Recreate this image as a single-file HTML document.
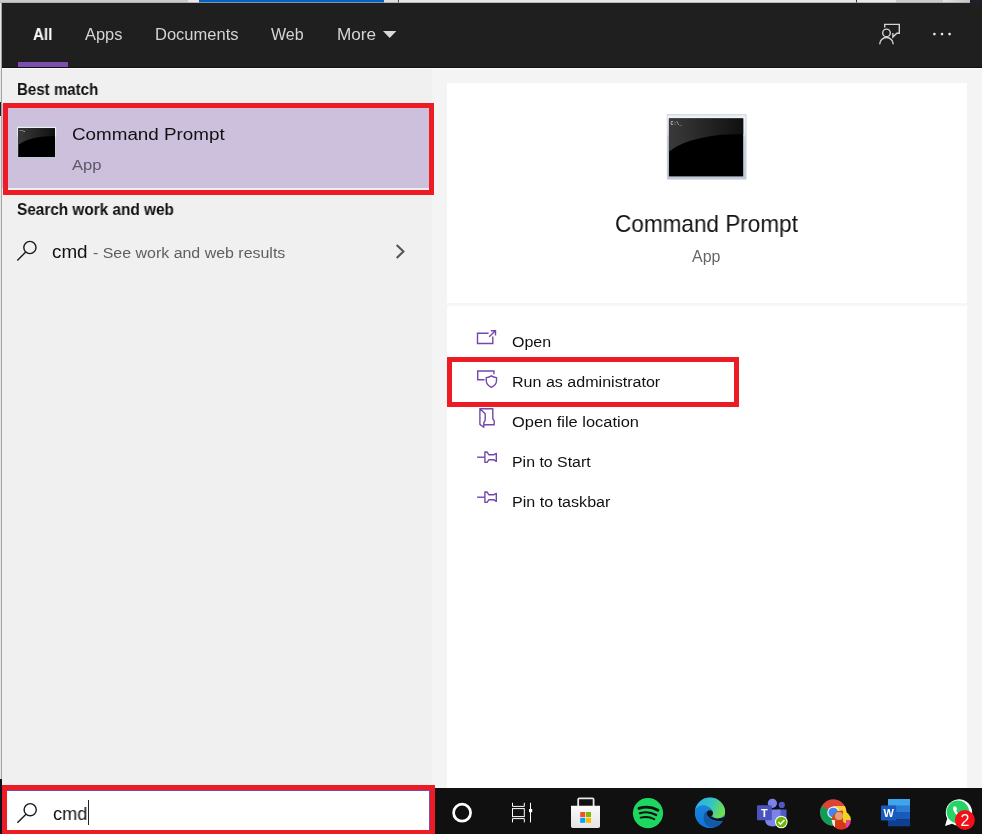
<!DOCTYPE html>
<html><head><meta charset="utf-8">
<style>
*{margin:0;padding:0;box-sizing:border-box}
html,body{width:982px;height:834px;overflow:hidden;background:#f4f4f4;font-family:"Liberation Sans",sans-serif;}
.a{position:absolute}
.t{position:absolute;white-space:nowrap;line-height:1;transform-origin:0 0;will-change:transform}
#hdr{left:2px;top:3px;width:980px;height:65px;background:#1f1f1f}
#left{left:2px;top:68px;width:430px;height:720px;background:#f0f0f0}
#right{left:432px;top:68px;width:550px;height:720px;background:#f4f4f4}
#card{left:447px;top:83px;width:520px;height:705px;background:#fff}
#task{left:0;top:788px;width:982px;height:46px;background:#101010}
.red{position:absolute;border:5px solid #ed1c24}
</style></head><body>
<!-- top strip -->
<div class="a" style="left:0;top:0;width:982px;height:3px;background:#cacaca"></div>
<div class="a" style="left:188px;top:0;width:11px;height:3px;background:#e9e9e9"></div>
<div class="a" style="left:199px;top:0;width:185px;height:3px;background:#0560c2"></div>
<div class="a" style="left:384px;top:0;width:14px;height:3px;background:#dedede"></div>
<div class="a" style="left:398px;top:0;width:1px;height:3px;background:#4a4a4a"></div>
<div class="a" style="left:399px;top:0;width:457px;height:3px;background:#e7e7e7"></div>
<div class="a" style="left:856px;top:0;width:1px;height:3px;background:#333"></div>
<div class="a" style="left:857px;top:0;width:39px;height:3px;background:#e9e9e9"></div>
<div class="a" style="left:896px;top:0;width:47px;height:3px;background:#cbcbcb"></div>
<div class="a" style="left:943px;top:0;width:27px;height:3px;background:linear-gradient(90deg,#e4e4e4,#c4c4c4)"></div>
<div class="a" style="left:970px;top:0;width:12px;height:3px;background:#1c212b"></div>
<div class="a" style="left:0;top:2px;width:970px;height:1px;background:#a8a8a8;opacity:.75"></div>
<!-- left strip -->
<div class="a" style="left:0;top:3px;width:2px;height:776px;background:#e6e6e6"></div>
<div class="a" style="left:1px;top:3px;width:1px;height:776px;background:#a4a4a4"></div>
<div class="a" style="left:0;top:102px;width:1px;height:14px;background:#222"></div>
<div id="hdr" class="a"></div>
<div id="left" class="a"></div>
<div id="right" class="a"></div>
<div id="card" class="a"></div>
<div id="task" class="a"></div>
<div class="a" style="left:2px;top:67px;width:980px;height:1px;background:#111"></div>
<div class="a" style="left:2px;top:68px;width:980px;height:1px;background:#fbfbfb"></div>

<!-- selected item -->
<div class="a" style="left:2px;top:104px;width:430px;height:84px;background:#cdc0dc"></div>
<div class="red" style="left:3px;top:103px;width:431px;height:92px"></div>
<!-- card divider -->
<div class="a" style="left:447px;top:303px;width:520px;height:3px;background:#f6f6f6"></div>
<div class="red" style="left:447px;top:357px;width:292px;height:50px"></div>
<!-- search box -->
<div class="a" style="left:2px;top:785px;width:433px;height:49px;background:#fff"></div>
<div class="a" style="left:7px;top:790px;width:423px;height:40px;border:1px solid #6b4fbb;border-bottom:none;border-left:none"></div>
<div class="red" style="left:2px;top:785px;width:433px;height:50px"></div>
<div class="a" style="left:0;top:779px;width:2px;height:55px;background:#0c1220"></div>
<div class="a" style="left:88px;top:800px;width:1px;height:25px;background:#222"></div>

<div class="t" style="left:33.20px;top:27px;font-size:16px;font-weight:bold;color:#ffffff;transform:scaleX(0.9500)">All</div>
<div class="t" style="left:85.20px;top:27px;font-size:16px;font-weight:normal;color:#d4d4d4;transform:scaleX(1.0255)">Apps</div>
<div class="t" style="left:155.17px;top:27px;font-size:16px;font-weight:normal;color:#d4d4d4;transform:scaleX(1.0323)">Documents</div>
<div class="t" style="left:270.90px;top:27px;font-size:16px;font-weight:normal;color:#d4d4d4;transform:scaleX(0.9966)">Web</div>
<div class="t" style="left:336.83px;top:27px;font-size:16px;font-weight:normal;color:#d4d4d4;transform:scaleX(1.0716)">More</div>
<div class="t" style="left:16.66px;top:82px;font-size:16px;font-weight:bold;color:#111111;transform:scaleX(0.9423)">Best match</div>
<div class="t" style="left:71.90px;top:126px;font-size:17.3px;font-weight:normal;color:#111111;transform:scaleX(1.0889)">Command Prompt</div>
<div class="t" style="left:71.90px;top:158px;font-size:14.7px;font-weight:normal;color:#5d5866;transform:scaleX(1.1284)">App</div>
<div class="t" style="left:17.40px;top:202px;font-size:16px;font-weight:bold;color:#111111;transform:scaleX(0.9589)">Search work and web</div>
<div class="t" style="left:51.70px;top:243px;font-size:18.5px;font-weight:normal;color:#111111;transform:scaleX(1.0184)">cmd</div>
<div class="t" style="left:93.30px;top:245px;font-size:15.4px;font-weight:normal;color:#5f5f5f;transform:scaleX(1.0359)">- See work and web results</div>
<div class="t" style="left:614.93px;top:213px;font-size:23.2px;font-weight:normal;color:#111111;transform:scaleX(0.9723)">Command Prompt</div>
<div class="t" style="left:692.30px;top:249px;font-size:15.7px;font-weight:normal;color:#666666;transform:scaleX(1.0182)">App</div>
<div class="t" style="left:512.10px;top:334px;font-size:15.5px;font-weight:normal;color:#111111;transform:scaleX(1.0323)">Open</div>
<div class="t" style="left:511.76px;top:374px;font-size:15.5px;font-weight:normal;color:#111111;transform:scaleX(1.0364)">Run as administrator</div>
<div class="t" style="left:512.10px;top:414px;font-size:15.5px;font-weight:normal;color:#111111;transform:scaleX(1.0600)">Open file location</div>
<div class="t" style="left:511.77px;top:454px;font-size:15.5px;font-weight:normal;color:#111111;transform:scaleX(1.0253)">Pin to Start</div>
<div class="t" style="left:511.76px;top:494px;font-size:15.5px;font-weight:normal;color:#111111;transform:scaleX(1.0384)">Pin to taskbar</div>
<div class="t" style="left:52.70px;top:805px;font-size:18.5px;font-weight:normal;color:#111111;transform:scaleX(0.9809)">cmd</div>
<svg class="a" style="left:383px;top:31px" width="14" height="7"><path d="M0 0H13.4L6.7 7Z" fill="#d8d8d8"/></svg>
<div class="a" style="left:18px;top:62px;width:50px;height:5px;background:#7b4fb0"></div>
<!-- header right icons -->
<svg class="a" style="left:870px;top:15px" width="100" height="40" viewBox="870 15 100 40" fill="none" stroke="#d4d4d4" stroke-width="1.4">
<path d="M884.7 27.6V24.4H899.3V33.3H896.8L892.9 37V33"/>
<circle cx="886.5" cy="32.9" r="3.8"/>
<path d="M879.7 44.2A6.75 6.75 0 0 1 893.2 44.2"/>
<g fill="#e6e6e6" stroke="none"><circle cx="934.4" cy="34.1" r="1.35"/><circle cx="942" cy="34.1" r="1.35"/><circle cx="949.6" cy="34.1" r="1.35"/></g>
</svg>
<!-- cmd icon defs -->
<svg width="0" height="0" style="position:absolute">
<defs>
<linearGradient id="gl" x1="0" y1="0" x2="1" y2="0"><stop offset="0" stop-color="#3a3a3a"/><stop offset="1" stop-color="#101010"/></linearGradient>
<linearGradient id="fr" x1="0" y1="0" x2="0" y2="1"><stop offset="0" stop-color="#dfe5ee"/><stop offset="0.05" stop-color="#f2f4f8"/><stop offset="0.3" stop-color="#e9edf3"/><stop offset="0.36" stop-color="#ced6e3"/><stop offset="1" stop-color="#c1c9d8"/></linearGradient>
</defs></svg>
<!-- small cmd icon -->
<svg class="a" style="left:16px;top:125px" width="42" height="36" viewBox="16 125 42 36">
<rect x="17" y="126.5" width="39.3" height="32" fill="url(#fr)" stroke="#bcc4d2" stroke-width="0.4"/>
<rect x="18.2" y="128.2" width="36.8" height="28.8" fill="#000"/>
<path d="M18.2 128.2H55V136Q30 136 18.2 145Z" fill="url(#gl)"/>
<path d="M19.5 130.5h1M21.5 130.5h1.2l1 1h1.2" stroke="#bbb" stroke-width="0.8" fill="none"/>
</svg>
<!-- big cmd icon -->
<svg class="a" style="left:664px;top:112px;will-change:transform" width="86" height="72" viewBox="664 112 86 72">
<rect x="667.6" y="115.2" width="79" height="64.6" fill="#000" opacity="0.12"/>
<rect x="667.1" y="114.5" width="78.8" height="64.4" fill="url(#fr)" stroke="#bcc4d2" stroke-width="0.5"/>
<rect x="668.9" y="118.4" width="74.3" height="58" fill="#000"/>
<path d="M668.9 118.4H743.2V134Q692 134 668.9 151.5Z" fill="url(#gl)"/>
<text x="670.6" y="125.3" font-family="Liberation Mono,monospace" font-size="4.8" font-weight="bold" fill="#c8c8c8">C:\_</text>
</svg>
<!-- search icon 1 -->
<svg class="a" style="left:14px;top:238px" width="28" height="26" viewBox="14 238 28 26" fill="none" stroke="#1a1a1a" stroke-width="1.4">
<circle cx="29.9" cy="247.5" r="6.1"/><path d="M25.7 252L17.3 260.6"/></svg>
<!-- chevron -->
<svg class="a" style="left:390px;top:240px" width="20" height="24" viewBox="390 240 20 24" fill="none" stroke="#555" stroke-width="2.1">
<path d="M396.7 245L403.4 251.5L396.7 258"/></svg>
<!-- action icons -->
<svg class="a" style="left:470px;top:325px" width="36" height="190" viewBox="470 325 36 190" fill="none" stroke="#7447ab" stroke-width="1.4">
<!-- open -->
<path d="M488.6 333.3H477.5V343.5H492.8V336.4"/><path d="M489.2 336.7L495.4 330.8M490.8 330.7H495.5V335.4"/>
<!-- run as admin -->
<path d="M484.6 379.8H477.7V371H493.9V374.2"/>
<path d="M486.3 377.6Q489.3 377.4 491.4 375.9Q493.5 377.4 496.5 377.6V381Q496.3 385 491.4 387.3Q486.5 385 486.3 381Z"/>
<!-- folder -->
<g stroke-linejoin="round"><path d="M479.9 408.7H492.8V419L494.2 420.6V424.8H484"/>
<path d="M479.9 408.7L485.2 413.7V420.4L483.8 422.6V427.2L479.9 424.4Z"/></g>
<!-- pins -->
<g id="pin" stroke-linejoin="round"><path d="M477.1 457.2H484.9"/><path d="M484.9 452H487L488.8 454.7H493.9L496.3 453.4V461.4L493.9 459.8H488.8L487 462.4H484.9Z"/></g>
<use href="#pin" y="40"/>
</svg>
<!-- search icon 2 -->
<svg class="a" style="left:14px;top:800px" width="28" height="26" viewBox="14 800 28 26" fill="none" stroke="#1a1a1a" stroke-width="1.4">
<circle cx="30.2" cy="809.7" r="6.1"/><path d="M26 814.2L17.4 822.8"/></svg>
<!-- taskbar icons -->
<svg class="a" style="left:440px;top:788px;will-change:transform" width="542" height="46" viewBox="440 788 542 46">
<defs>
<linearGradient id="eg1" x1="0" y1="0.2" x2="1" y2="0.6"><stop offset="0" stop-color="#2fa8ee"/><stop offset="0.5" stop-color="#33c3c4"/><stop offset="1" stop-color="#72e048"/></linearGradient>
<linearGradient id="eg2" x1="0" y1="0" x2="0" y2="1"><stop offset="0" stop-color="#1f8ade"/><stop offset="1" stop-color="#0d74d6"/></linearGradient>
<linearGradient id="bag" x1="0" y1="0" x2="0" y2="1"><stop offset="0" stop-color="#fafafa"/><stop offset="1" stop-color="#e4e4e4"/></linearGradient>
<filter id="bl" x="-20%" y="-20%" width="140%" height="140%"><feGaussianBlur stdDeviation="0.7"/></filter>
<clipPath id="av"><circle cx="841.3" cy="820.2" r="9.6"/></clipPath>
<clipPath id="ec"><circle cx="710" cy="812.9" r="15.3"/></clipPath>
</defs>
<!-- cortana -->
<circle cx="462.1" cy="812.7" r="8.5" fill="none" stroke="#fff" stroke-width="2.7"/>
<!-- task view -->
<g fill="none" stroke="#fff" stroke-width="1">
<path d="M512.5 802.8V806.4H524.3V802.8"/><rect x="512.5" y="808.6" width="11.8" height="8"/><path d="M512.5 822.4V818.6H524.3V822.4"/>
<path d="M530.5 802.8V822.4"/></g>
<rect x="529" y="809" width="3.2" height="3.2" fill="#fff"/>
<!-- store -->
<path d="M578.2 806V799.4Q578.2 798.4 579.2 798.4H592.6Q593.6 798.4 593.6 799.4V806" fill="none" stroke="#e8e8e8" stroke-width="1.8"/>
<path d="M571 805.8H600V826.2Q600 828 598.2 828H572.8Q571 828 571 826.2Z" fill="url(#bag)"/>
<rect x="580.2" y="812" width="5" height="5" fill="#f25022"/><rect x="586" y="812" width="5" height="5" fill="#7fba00"/>
<rect x="580.2" y="817.8" width="5" height="5" fill="#00a4ef"/><rect x="586" y="817.8" width="5" height="5" fill="#ffb900"/>
<!-- spotify -->
<circle cx="648" cy="813.1" r="15.1" fill="#1ed760"/>
<g fill="none" stroke="#111" stroke-linecap="round">
<path d="M638.9 808.4Q649 805 658 810.3" stroke-width="2.8"/>
<path d="M639.8 813.2Q648.5 810.6 656.2 815" stroke-width="2.2"/>
<path d="M640.6 817.7Q648 815.8 654.4 819.2" stroke-width="1.8"/>
</g>
<!-- edge -->
<g clip-path="url(#ec)">
<circle cx="710" cy="812.9" r="15.3" fill="url(#eg2)"/>
<path d="M705.6 811.6Q702.4 816 704.2 821.5Q706.5 827.4 714 827.6Q720.5 826.6 723.4 820.6Q714 823 709.5 817.5Q707 815 707.2 811.6Z" fill="#1458aa"/>
<path d="M694.6 810A15.3 15.3 0 0 1 725.3 811.6Q725.2 817 719 818.2Q714.3 818.7 712 816Q714 813 712.4 810.4Q709.8 806 703.7 805.3Q698 805.2 694.6 810Z" fill="url(#eg1)"/>
<path d="M726 814.6Q724.8 818 718.3 818.6L716.5 820L724.6 820.8L726.5 817Z" fill="#111"/>
<circle cx="709.9" cy="813.2" r="3" fill="#111"/>
<path d="M708.6 815Q711.5 820.6 723.8 819.9" fill="none" stroke="#111" stroke-width="1.9"/>
</g>
<!-- teams -->
<circle cx="772.4" cy="803.3" r="4.6" fill="#7b83eb"/>
<circle cx="781.8" cy="804.9" r="3.1" fill="#5059c9"/>
<path d="M778 809.5H786.5V819Q786.3 823.5 782 824H778Z" fill="#5059c9"/>
<path d="M765 809.5H780.5V820Q780 826.3 772.8 826.5Q765.5 826.3 765 820Z" fill="#7b83eb"/>
<rect x="757" y="805.2" width="14.8" height="15" rx="1" fill="#4b53bc"/>
<text x="764.4" y="817" text-anchor="middle" font-family="Liberation Sans,sans-serif" font-weight="bold" font-size="11" fill="#fff">T</text>
<circle cx="781.3" cy="822" r="6.3" fill="#fff"/><circle cx="781.3" cy="822" r="5.3" fill="#6bb700"/>
<path d="M778.4 822L780.5 824.2L784.4 820" fill="none" stroke="#fff" stroke-width="1.5"/>
<!-- chrome -->
<circle cx="833.3" cy="812.5" r="13.2" fill="#db4437"/>
<path d="M833.3 812.5L821.9 805.9A13.2 13.2 0 0 0 833.3 825.7L839 815.8Z" fill="#0f9d58"/>
<path d="M833.3 812.5L839 815.8L833.3 825.7A13.2 13.2 0 0 0 844.7 805.9H833.3Z" fill="#ffcd40"/>
<circle cx="833.3" cy="812.5" r="6" fill="#f1f1f1"/><circle cx="833.3" cy="812.5" r="4.8" fill="#4285f4"/>
<g clip-path="url(#av)"><g filter="url(#bl)"><rect x="830" y="809" width="24" height="24" fill="#c8501e"/>
<rect x="843" y="811" width="10" height="12" fill="#f6d21a"/><rect x="846" y="820" width="8" height="8" fill="#e8409a"/>
<circle cx="839" cy="816" r="4" fill="#e8a070"/><path d="M833 830Q834 820 840 820Q846 821 846 830Z" fill="#d8341a"/>
<rect x="831" y="820" width="4" height="8" fill="#f4e8d8"/></g></g>
<!-- word -->
<rect x="888" y="799" width="22" height="6.9" fill="#41a5ee"/><rect x="888" y="805.8" width="22" height="6.9" fill="#2b7cd3"/>
<rect x="888" y="812.6" width="22" height="6.9" fill="#185abd"/><rect x="888" y="819.4" width="22" height="6.9" fill="#103f91"/>
<rect x="881" y="805.4" width="15.2" height="15" rx="1" fill="#185abd"/>
<text x="888.6" y="817.2" text-anchor="middle" font-family="Liberation Sans,sans-serif" font-weight="bold" font-size="11" fill="#fff">W</text>
<!-- whatsapp -->
<path d="M945 826L947.2 818.5A13.2 13.2 0 1 1 952 823.7Z" fill="#fff"/>
<circle cx="957.9" cy="811.9" r="11.3" fill="#25d366"/>
<path d="M953.5 806.5Q952.5 808 953.5 810.5Q955.5 815 960 817Q962 817.8 963.5 816.5L964 815L961.5 813.5L960.3 814.6Q957.5 813.4 956.2 810.5L957.2 809.3L956 806.5Z" fill="#fff"/>
<circle cx="964.9" cy="820" r="10" fill="#f30f17"/>
<text x="964.9" y="825.8" text-anchor="middle" font-family="Liberation Sans,sans-serif" font-size="16" fill="#fff">2</text>
</svg>

</body></html>
